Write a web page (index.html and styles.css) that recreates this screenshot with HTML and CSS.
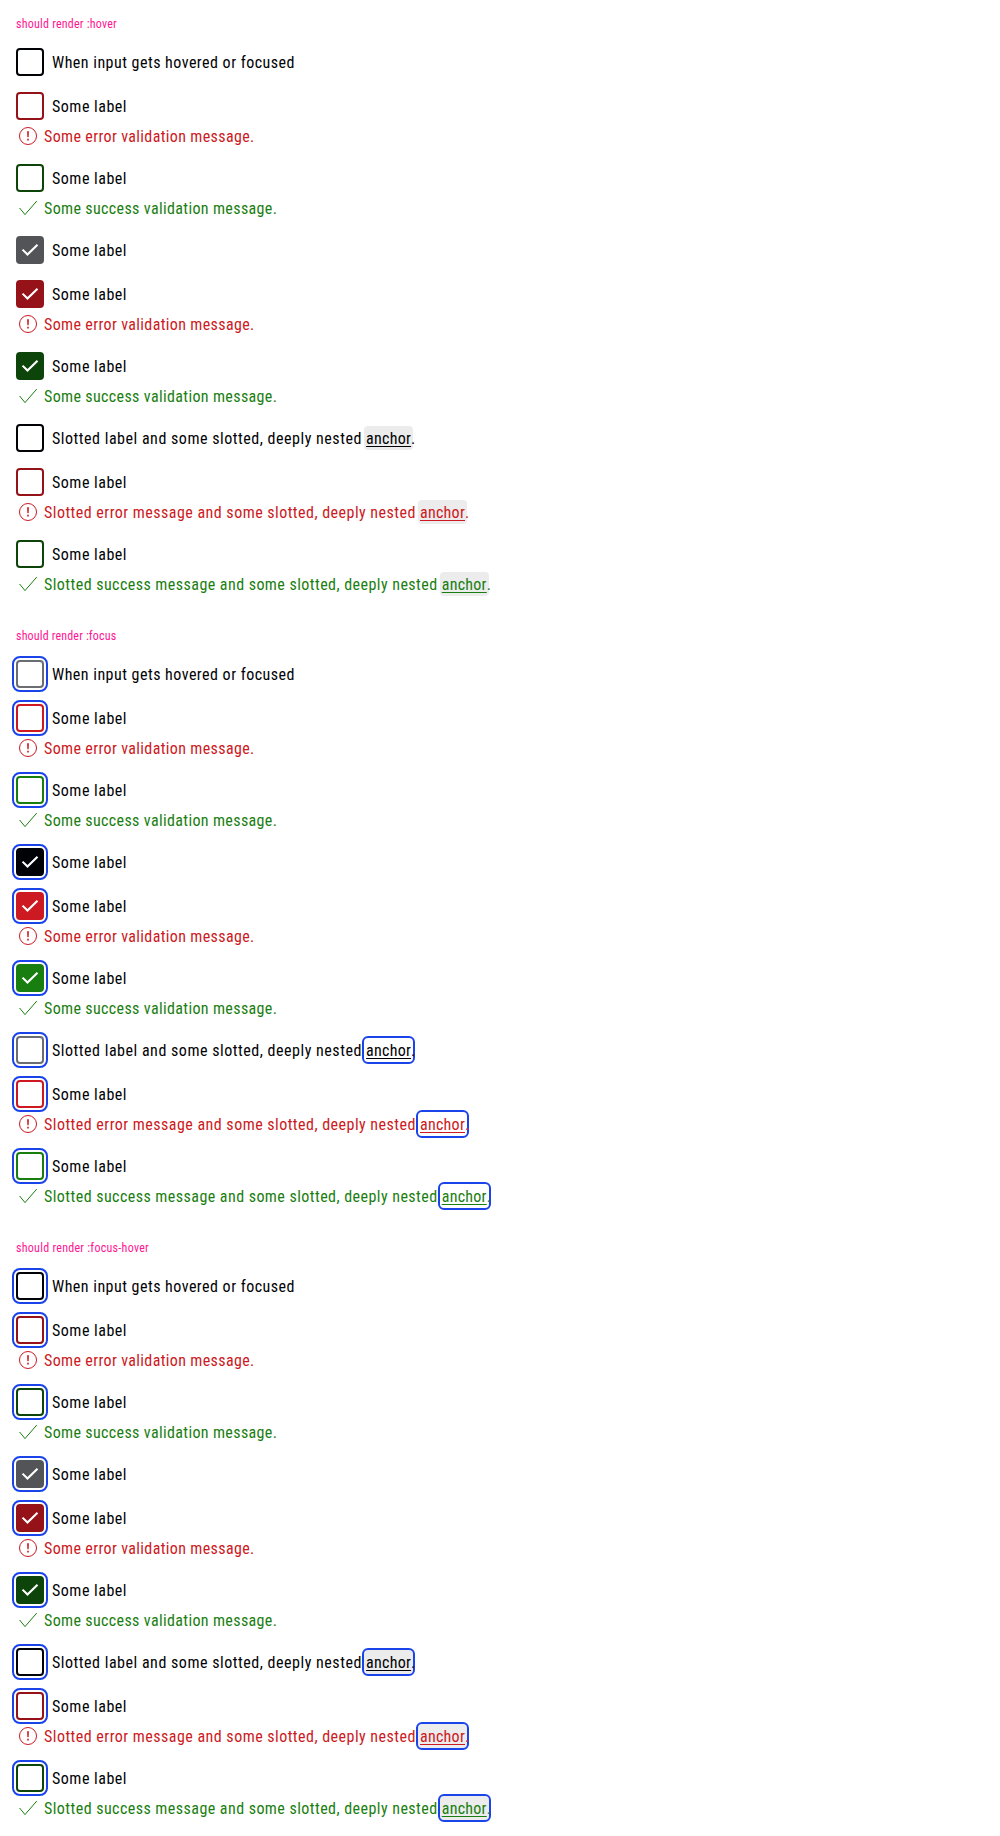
FILE: index.html
```html
<!DOCTYPE html>
<html lang="en">
<head>
<meta charset="utf-8">
<title>Checkbox states</title>
<link rel="stylesheet" href="styles.css">
</head>
<body>
<svg class="sprite" aria-hidden="true">
  <symbol id="tick" viewBox="0 0 24 24"><path d="m20.22 7.47-1.47-1.42-9.26 9.02-4.24-4.15-1.47 1.42 5.71 5.6z"/></symbol>
  <symbol id="error" viewBox="0 0 24 24"><circle cx="12" cy="12" r="8.5" fill="none" stroke="currentColor"/><path d="M11.1 7.3h1.8l-.25 6h-1.3zM11.2 14.8h1.6v1.6h-1.6z" fill="currentColor"/></symbol>
  <symbol id="success" viewBox="0 0 24 24"><path d="m3.6 12 5.4 6.6L20.7 5.1" fill="none" stroke="currentColor"/></symbol>
</svg>

<section class="state hover">
  <h2 class="title t-hover">should render :hover</h2>
  <div class="field"><label class="row"><span class="box"></span><span class="text w-when">When input gets hovered or focused</span></label></div>
  <div class="field error"><label class="row"><span class="box"></span><span class="text">Some label</span></label><p class="message"><svg class="icon"><use href="#error"/></svg><span class="text">Some error validation message.</span></p></div>
  <div class="field success"><label class="row"><span class="box"></span><span class="text">Some label</span></label><p class="message"><svg class="icon"><use href="#success"/></svg><span class="text">Some success validation message.</span></p></div>
  <div class="field checked"><label class="row"><span class="box"><svg class="tick"><use href="#tick"/></svg></span><span class="text">Some label</span></label></div>
  <div class="field checked error"><label class="row"><span class="box"><svg class="tick"><use href="#tick"/></svg></span><span class="text">Some label</span></label><p class="message"><svg class="icon"><use href="#error"/></svg><span class="text">Some error validation message.</span></p></div>
  <div class="field checked success"><label class="row"><span class="box"><svg class="tick"><use href="#tick"/></svg></span><span class="text">Some label</span></label><p class="message"><svg class="icon"><use href="#success"/></svg><span class="text">Some success validation message.</span></p></div>
  <div class="field"><label class="row"><span class="box"></span><span class="text w-label">Slotted label and some slotted, deeply nested <a class="anchor">anchor</a>.</span></label></div>
  <div class="field error"><label class="row"><span class="box"></span><span class="text">Some label</span></label><p class="message"><svg class="icon"><use href="#error"/></svg><span class="text w-error">Slotted error message and some slotted, deeply nested <a class="anchor">anchor</a>.</span></p></div>
  <div class="field success"><label class="row"><span class="box"></span><span class="text">Some label</span></label><p class="message"><svg class="icon"><use href="#success"/></svg><span class="text w-success">Slotted success message and some slotted, deeply nested <a class="anchor">anchor</a>.</span></p></div>
</section>

<section class="state focus">
  <h2 class="title t-focus">should render :focus</h2>
  <div class="field"><label class="row"><span class="box"></span><span class="text w-when">When input gets hovered or focused</span></label></div>
  <div class="field error"><label class="row"><span class="box"></span><span class="text">Some label</span></label><p class="message"><svg class="icon"><use href="#error"/></svg><span class="text">Some error validation message.</span></p></div>
  <div class="field success"><label class="row"><span class="box"></span><span class="text">Some label</span></label><p class="message"><svg class="icon"><use href="#success"/></svg><span class="text">Some success validation message.</span></p></div>
  <div class="field checked"><label class="row"><span class="box"><svg class="tick"><use href="#tick"/></svg></span><span class="text">Some label</span></label></div>
  <div class="field checked error"><label class="row"><span class="box"><svg class="tick"><use href="#tick"/></svg></span><span class="text">Some label</span></label><p class="message"><svg class="icon"><use href="#error"/></svg><span class="text">Some error validation message.</span></p></div>
  <div class="field checked success"><label class="row"><span class="box"><svg class="tick"><use href="#tick"/></svg></span><span class="text">Some label</span></label><p class="message"><svg class="icon"><use href="#success"/></svg><span class="text">Some success validation message.</span></p></div>
  <div class="field"><label class="row"><span class="box"></span><span class="text w-label">Slotted label and some slotted, deeply nested <a class="anchor">anchor</a>.</span></label></div>
  <div class="field error"><label class="row"><span class="box"></span><span class="text">Some label</span></label><p class="message"><svg class="icon"><use href="#error"/></svg><span class="text w-error">Slotted error message and some slotted, deeply nested <a class="anchor">anchor</a>.</span></p></div>
  <div class="field success"><label class="row"><span class="box"></span><span class="text">Some label</span></label><p class="message"><svg class="icon"><use href="#success"/></svg><span class="text w-success">Slotted success message and some slotted, deeply nested <a class="anchor">anchor</a>.</span></p></div>
</section>

<section class="state hover focus">
  <h2 class="title t-focus-hover">should render :focus-hover</h2>
  <div class="field"><label class="row"><span class="box"></span><span class="text w-when">When input gets hovered or focused</span></label></div>
  <div class="field error"><label class="row"><span class="box"></span><span class="text">Some label</span></label><p class="message"><svg class="icon"><use href="#error"/></svg><span class="text">Some error validation message.</span></p></div>
  <div class="field success"><label class="row"><span class="box"></span><span class="text">Some label</span></label><p class="message"><svg class="icon"><use href="#success"/></svg><span class="text">Some success validation message.</span></p></div>
  <div class="field checked"><label class="row"><span class="box"><svg class="tick"><use href="#tick"/></svg></span><span class="text">Some label</span></label></div>
  <div class="field checked error"><label class="row"><span class="box"><svg class="tick"><use href="#tick"/></svg></span><span class="text">Some label</span></label><p class="message"><svg class="icon"><use href="#error"/></svg><span class="text">Some error validation message.</span></p></div>
  <div class="field checked success"><label class="row"><span class="box"><svg class="tick"><use href="#tick"/></svg></span><span class="text">Some label</span></label><p class="message"><svg class="icon"><use href="#success"/></svg><span class="text">Some success validation message.</span></p></div>
  <div class="field"><label class="row"><span class="box"></span><span class="text w-label">Slotted label and some slotted, deeply nested <a class="anchor">anchor</a>.</span></label></div>
  <div class="field error"><label class="row"><span class="box"></span><span class="text">Some label</span></label><p class="message"><svg class="icon"><use href="#error"/></svg><span class="text w-error">Slotted error message and some slotted, deeply nested <a class="anchor">anchor</a>.</span></p></div>
  <div class="field success"><label class="row"><span class="box"></span><span class="text">Some label</span></label><p class="message"><svg class="icon"><use href="#success"/></svg><span class="text w-success">Slotted success message and some slotted, deeply nested <a class="anchor">anchor</a>.</span></p></div>
</section>
</body>
</html>
```
FILE: styles.css
```css
* { box-sizing: border-box; }

body {
  margin: 0;
  background: #fff;
  color: #010205;
  font: 400 16px/24px Roboto, sans-serif;
  font-stretch: 85%;
  letter-spacing: 0.5px;
}

.sprite { display: none; }

.state {
  --edge: #6b6d70;
  --fill: #010205;
  --error: #cc1922;
  --success: #197e10;
  display: flex;
  flex-direction: column;
  gap: 16px;
  padding: 16px;
}

.state.hover {
  --edge: #010205;
  --fill: #535457;
  --error: #951219;
  --success: #0d4409;
}

.title {
  margin: 0;
  height: 16px;
  color: #ff1493;
  font-size: 12px;
  font-weight: 400;
  line-height: 17px;
}
.t-hover { letter-spacing: 0.23px; }
.t-focus { letter-spacing: 0.17px; }
.t-focus-hover { letter-spacing: 0.27px; }

.field {
  display: flex;
  flex-direction: column;
  gap: 4px;
}
.field.error { --edge: var(--error); --fill: var(--error); }
.field.success { --edge: var(--success); --fill: var(--success); }

.row {
  display: flex;
  align-items: center;
  gap: 8px;
}

.box {
  display: flex;
  align-items: center;
  justify-content: center;
  flex: none;
  width: 28px;
  height: 28px;
  border: 2px solid var(--edge);
  border-radius: 4px;
}
.checked .box { border-color: var(--fill); background: var(--fill); }
.focus .box { outline: 2px solid #1a44ea; outline-offset: 2px; }

.tick { flex: none; width: 24px; height: 24px; fill: #fff; }

.text { height: 24px; line-height: 26px; }

.message {
  display: flex;
  gap: 4px;
  margin: 0;
  letter-spacing: 0.36px;
}
.error .message { color: #cc1922; }
.success .message { color: #197e10; }

.icon { flex: none; width: 24px; height: 24px; }

.w-when { letter-spacing: 0.48px; }
.w-label { letter-spacing: 0.52px; }
.w-error { letter-spacing: 0.47px; }
.w-success { letter-spacing: 0.45px; }

.anchor {
  display: inline-block;
  height: 24px;
  margin: 0 -2px;
  padding: 0 2px;
  border-radius: 4px;
  letter-spacing: 0.26px;
  text-decoration: underline;
  text-decoration-skip-ink: none;
  text-decoration-thickness: 1px;
  text-underline-offset: 2px;
}
.hover .anchor { background: #ececec; }
.focus .anchor { outline: 2px solid #1a44ea; }
```
